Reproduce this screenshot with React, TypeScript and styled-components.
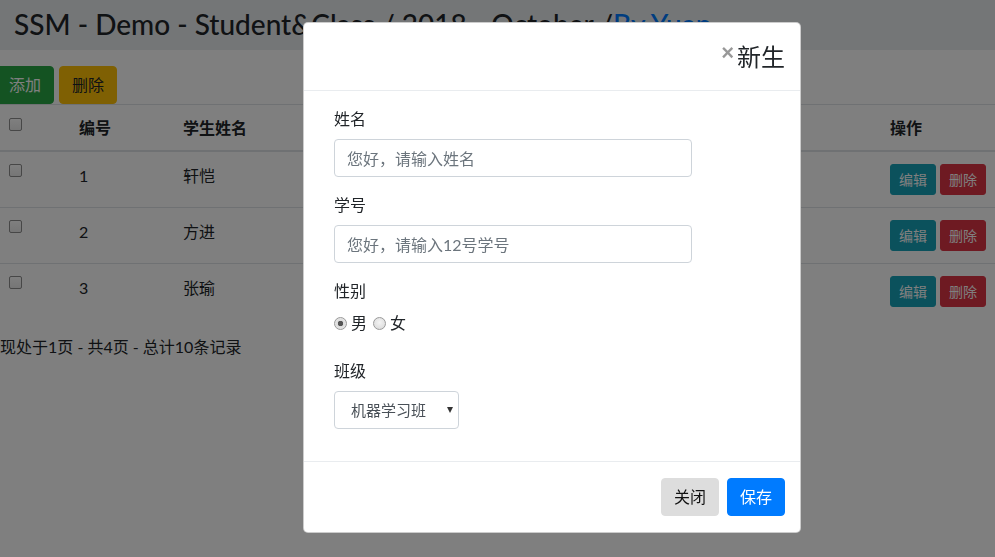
import styled, { createGlobalStyle } from "styled-components";

const GlobalStyle = createGlobalStyle`
  html, body {
    margin: 0;
    padding: 0;
    overflow: hidden;
    background: #fff;
  }
  body {
    font-family: "Lato", "Noto Sans CJK SC", sans-serif;
    font-size: 16px;
    line-height: 1.5;
    color: #212529;
  }
  * {
    box-sizing: border-box;
  }
`;

type Variant = "success" | "warning" | "info" | "danger" | "light" | "primary";

const palette: Record<Variant, { bg: string; fg: string }> = {
  success: { bg: "#28a745", fg: "#fff" },
  warning: { bg: "#ffc107", fg: "#212529" },
  info: { bg: "#17a2b8", fg: "#fff" },
  danger: { bg: "#dc3545", fg: "#fff" },
  light: { bg: "#dddddd", fg: "#111" },
  primary: { bg: "#007bff", fg: "#fff" },
};

const rows = [
  { id: 1, name: "轩恺" },
  { id: 2, name: "方进" },
  { id: 3, name: "张瑜" },
];

const App = () => (
  <>
    <GlobalStyle />
    <Page>
      <Banner>
        <Title>
          SSM - Demo - Student&amp;Class / 2018 - October /<Link>By Yuan</Link>
        </Title>
      </Banner>
      <Toolbar>
        <Btn $variant="success">添加</Btn>
        <Btn $variant="warning">删除</Btn>
      </Toolbar>
      <Table>
        <colgroup>
          <col style={{ width: 70 }} />
          <col style={{ width: 104 }} />
          <col style={{ width: 707 }} />
          <col style={{ width: 120 }} />
        </colgroup>
        <thead>
          <tr>
            <Th>
              <Check type="checkbox" />
            </Th>
            <Th>编号</Th>
            <Th>学生姓名</Th>
            <Th>操作</Th>
          </tr>
        </thead>
        <tbody>
          {rows.map((r) => (
            <tr key={r.id}>
              <Td>
                <Check type="checkbox" />
              </Td>
              <Td>{r.id}</Td>
              <Td>{r.name}</Td>
              <Td>
                <Actions>
                  <SmallBtn $variant="info">编辑</SmallBtn>
                  <SmallBtn $variant="danger">删除</SmallBtn>
                </Actions>
              </Td>
            </tr>
          ))}
        </tbody>
      </Table>
      <PageInfo>现处于1页 - 共4页 - 总计10条记录</PageInfo>
    </Page>

    <Backdrop />
    <ModalLayer>
      <Dialog>
        <ModalHeader>
          <Close type="button">×</Close>
          <ModalTitle>新生</ModalTitle>
        </ModalHeader>
        <ModalBody>
          <Field>
            <Label>姓名</Label>
            <Input placeholder="您好，请输入姓名" />
          </Field>
          <Field>
            <Label>学号</Label>
            <Input placeholder="您好，请输入12号学号" />
          </Field>
          <Field $gap={24}>
            <Label>性别</Label>
            <RadioRow>
              <Radio type="radio" name="sex" defaultChecked />
              <span>男</span>
              <Radio type="radio" name="sex" />
              <span>女</span>
            </RadioRow>
          </Field>
          <Field>
            <Label>班级</Label>
            <SelectBox>
              <Select defaultValue="ml">
                <option value="ml">机器学习班</option>
                <option value="web">前端开发班</option>
              </Select>
              <Caret>▾</Caret>
            </SelectBox>
          </Field>
        </ModalBody>
        <ModalFooter>
          <Btn $variant="light">关闭</Btn>
          <Btn $variant="primary">保存</Btn>
        </ModalFooter>
      </Dialog>
    </ModalLayer>
  </>
);

const Page = styled.div`
  width: 995px;
  height: 557px;
  overflow: hidden;
`;

const Banner = styled.header`
  height: 50px;
  background: #e9ecef;
  padding: 0 14px;
  display: flex;
  align-items: center;
`;

const Title = styled.h3`
  margin: 0;
  font-size: 28px;
  font-weight: 500;
  line-height: 1.2;
  white-space: nowrap;
  color: #212529;
`;

const Link = styled.a`
  color: #007bff;
  text-decoration: none;
`;

const Toolbar = styled.div`
  display: flex;
  gap: 5px;
  margin: 16px 0 0 -4px;
`;

const Btn = styled.button<{ $variant: Variant }>`
  font-family: inherit;
  font-size: 16px;
  line-height: 24px;
  padding: 6px 12px;
  border: 1px solid ${(p) => palette[p.$variant].bg};
  border-radius: 4px;
  background: ${(p) => palette[p.$variant].bg};
  color: ${(p) => palette[p.$variant].fg};
  cursor: pointer;
`;

const SmallBtn = styled(Btn)`
  font-size: 14px;
  line-height: 21px;
  padding: 4px 8px;
  border-radius: 3px;
`;

const Table = styled.table`
  width: 1001px;
  margin-left: -3px;
  border-collapse: collapse;
  table-layout: fixed;
`;

const Th = styled.th`
  text-align: left;
  font-weight: 700;
  padding: 11px 12px 10px;
  line-height: 24px;
  vertical-align: bottom;
  border-top: 1px solid #dee2e6;
  border-bottom: 2px solid #dee2e6;
  white-space: nowrap;

  input {
    position: relative;
    top: 2px;
  }
`;

const Td = styled.td`
  padding: 12px;
  line-height: 24px;
  vertical-align: top;
  border-top: 1px solid #dee2e6;
  white-space: nowrap;
`;

const Actions = styled.div`
  display: flex;
  gap: 4px;
`;

const Check = styled.input`
  appearance: none;
  width: 13px;
  height: 13px;
  margin: 0;
  border: 1px solid #8f8f8f;
  border-radius: 2px;
  background: linear-gradient(#fff, #ececec);
  vertical-align: top;
`;

const PageInfo = styled.div`
  margin-top: 16px;
  line-height: 24px;
`;

const Backdrop = styled.div`
  position: fixed;
  inset: 0;
  background: rgba(0, 0, 0, 0.5);
`;

const ModalLayer = styled.div`
  position: fixed;
  inset: 0;
  padding: 22px 0 0 303px;
`;

const Dialog = styled.div`
  width: 498px;
  background: #fff;
  border: 1px solid rgba(0, 0, 0, 0.2);
  border-radius: 5px;
  display: flex;
  flex-direction: column;
`;

const ModalHeader = styled.div`
  display: flex;
  align-items: center;
  justify-content: flex-end;
  padding: 16px 15px 16px 16px;
  border-bottom: 1px solid #e9ecef;
`;

const Close = styled.button`
  background: none;
  border: 0;
  padding: 0;
  margin: 0 3px 0 0;
  font-family: "Liberation Sans", sans-serif;
  font-size: 22px;
  font-weight: 700;
  line-height: 1;
  color: #000;
  opacity: 0.4;
  position: relative;
  top: -4px;
`;

const ModalTitle = styled.h4`
  margin: 0;
  font-size: 24px;
  font-weight: 400;
  line-height: 35px;
  color: #212529;
`;

const ModalBody = styled.div`
  padding: 16px 30px;
`;

const Field = styled.div<{ $gap?: number }>`
  margin-bottom: ${(p) => p.$gap ?? 16}px;
`;

const Label = styled.label`
  display: block;
  margin-bottom: 8px;
  line-height: 24px;
`;

const Input = styled.input`
  display: block;
  width: 358px;
  height: 38px;
  padding: 6px 12px;
  font-family: inherit;
  font-size: 16px;
  color: #495057;
  border: 1px solid #ced4da;
  border-radius: 4px;
  &::placeholder {
    color: #6c757d;
  }
`;

const RadioRow = styled.div`
  display: flex;
  align-items: center;
  gap: 4px;
  height: 24px;
  span {
    margin-right: 2px;
  }
`;

const Radio = styled.input`
  appearance: none;
  width: 13px;
  height: 13px;
  margin: 0;
  border-radius: 50%;
  border: 1px solid #9a9a9a;
  background: radial-gradient(circle at 50% 40%, #f4f4f4, #d6d6d6);
  &:checked {
    background: radial-gradient(circle, #555 0 2.5px, #dcdcdc 3px, #eee 100%);
  }
`;

const SelectBox = styled.div`
  position: relative;
  width: 125px;
`;

const Select = styled.select`
  appearance: none;
  width: 125px;
  height: 38px;
  padding: 0 24px 0 16px;
  font-family: inherit;
  font-size: 15px;
  color: #495057;
  background: #fff;
  border: 1px solid #ced4da;
  border-radius: 4px;
`;

const Caret = styled.span`
  position: absolute;
  right: 6px;
  top: 9px;
  font-size: 12px;
  color: #333;
  pointer-events: none;
`;

const ModalFooter = styled.div`
  display: flex;
  justify-content: flex-end;
  gap: 8px;
  padding: 16px 15px 16px 16px;
  border-top: 1px solid #e9ecef;
`;

export default App;
